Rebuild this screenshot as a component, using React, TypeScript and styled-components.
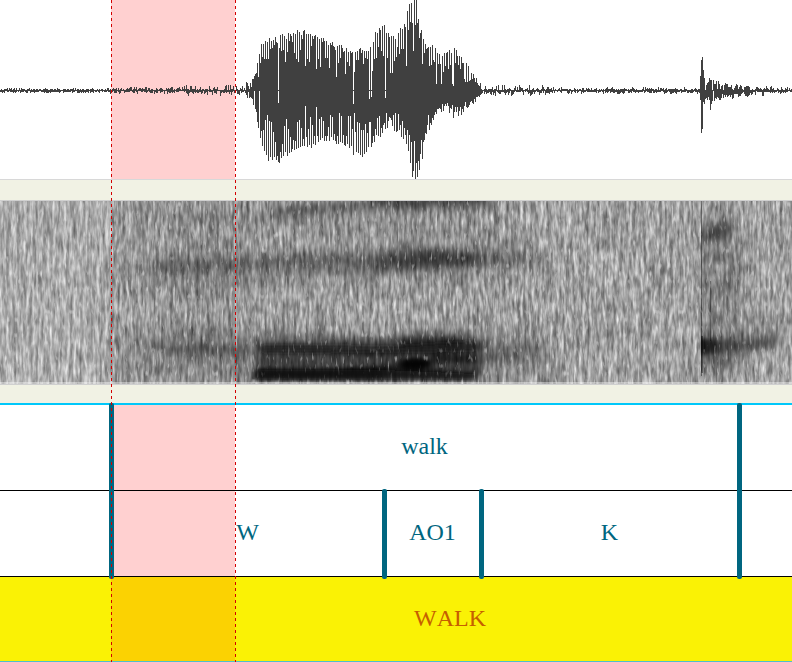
import React from "react";
import styled, { createGlobalStyle } from "styled-components";

const GlobalStyle = createGlobalStyle`
  * { box-sizing: border-box; }
  body { margin: 0; background: #ffffff; }
`;

/* The visible window is 792 steps long; every position is a step in it. */
const SPAN = 792;
const pct = (n: number) => `${(n / SPAN) * 100}%`;

const Editor = styled.main`
  position: relative;
  display: flex;
  flex-direction: column;
  width: 100%;
  overflow: hidden;
  background: #f1f2e4;
  font-family: "Liberation Serif", "Times New Roman", serif;
  font-kerning: none;
`;

const WavePanel = styled.section`
  position: relative;
  height: 180px;
  background: #ffffff;
  border-bottom: 1px solid #d8d8d8;
`;

const SpectrumPanel = styled.section`
  height: 185px;
  margin: 20px 0 18px;
  border-top: 1px solid #d0d0d0;
  border-bottom: 1px solid #d0d0d0;
`;

const Plot = styled.svg`
  position: relative;
  display: block;
  width: 100%;
  height: 100%;
`;

const Tiers = styled.section`
  border-top: 2px solid #00c8fa;
`;

const Tier = styled.div<{ $active?: boolean; $lead: number; $tail: number }>`
  position: relative;
  display: flex;
  height: ${(p) => (p.$active ? 85 : 86)}px;
  padding: 0 ${(p) => pct(p.$tail)} 0 ${(p) => pct(p.$lead)};
  background: ${(p) => (p.$active ? "#faf205" : "#ffffff")};
  color: ${(p) => (p.$active ? "#c65f00" : "#006680")};
  border-bottom: 1px solid ${(p) => (p.$active ? "#50c0c8" : "#000000")};
`;

const Interval = styled.span<{ $length: number }>`
  position: relative;
  flex: ${(p) => p.$length} 1 0;
  text-align: center;
  font-size: 24px;
  line-height: 82px;
`;

const Selection = styled.div<{ $active?: boolean }>`
  position: absolute;
  top: 0;
  bottom: 0;
  left: ${pct(111)};
  width: ${pct(124)};
  background: ${(p) => (p.$active ? "#fbd202" : "#ffd0d0")};
`;

const Boundary = styled.i<{ $at: number; $tiers?: number }>`
  position: absolute;
  z-index: 1;
  top: -2px;
  left: ${(p) => pct(p.$at)};
  width: 5px;
  height: ${(p) => (p.$tiers ?? 1) * 86 + 4}px;
  margin-left: -2px;
  border-radius: 2px;
  background: #006680;
`;

const Cursor = styled.i<{ $at: number }>`
  position: absolute;
  z-index: 2;
  top: 0;
  bottom: 0;
  left: ${(p) => pct(p.$at)};
  width: 1px;
  background: repeating-linear-gradient(#d40000 0 3px, transparent 3px 6px);
`;

/* Deterministic noise, so the trace looks the same on every render. */
function makeRandom(seed: number) {
  let s = seed;
  return () => {
    s = (s * 1664525 + 1013904223) >>> 0;
    return s / 4294967296;
  };
}

/* Peaks of the voiced part, one per column from step 246, in thirds of a unit. */
const VOICED_TOP = [
  245, 250, 258, 268, 248, 262, 236, 236, 228, 222, 219, 189, 232, 162, 190, 132, 172, 132, 178, 123,
  178, 126, 178, 114, 147, 123, 144, 120, 136, 111, 126, 129, 308, 144, 105, 152, 101, 150, 108, 186,
  117, 155, 99, 122, 102, 107, 125, 99, 158, 102, 178, 90, 186, 96, 150, 105, 117, 93, 90, 198,
  102, 177, 102, 186, 102, 137, 108, 117, 108, 105, 207, 111, 177, 117, 201, 114, 126, 114, 123, 174,
  123, 174, 135, 204, 129, 134, 126, 138, 141, 150, 231, 138, 189, 135, 174, 135, 144, 155, 153, 222,
  144, 186, 155, 198, 153, 159, 156, 312, 216, 156, 180, 153, 180, 147, 144, 158, 150, 192, 153, 174,
  153, 177, 153, 297, 141, 291, 213, 126, 177, 96, 174, 99, 141, 84, 90, 153, 78, 168, 75, 293,
  99, 174, 99, 111, 219, 108, 219, 108, 183, 117, 171, 141, 99, 162, 84, 147, 87, 147, 72, 81,
  198, 33, 90, 12, 66, 9, 69, 153, 0, 75, 0, 69, 57, 114, 99, 90, 192, 117, 159, 132,
  147, 144, 141, 198, 141, 195, 135, 180, 186, 144, 252, 159, 192, 162, 192, 252, 168, 216, 159, 198,
  159, 156, 207, 150, 195, 159, 252, 258, 144, 189, 150, 168, 195, 167, 207, 171, 189, 189, 237, 246,
  189, 246, 198, 243, 240, 219, 237, 222, 234, 246, 234, 249, 255, 258, 249, 267,
];

const VOICED_BOTTOM = [
  285, 294, 276, 294, 290, 294, 297, 315, 273, 327, 336, 366, 384, 272, 414, 393, 438, 390, 453, 360,
  465, 345, 483, 363, 471, 366, 480, 396, 471, 426, 480, 468, 486, 489, 456, 474, 432, 468, 378, 456,
  357, 468, 387, 459, 411, 456, 447, 420, 450, 423, 447, 366, 444, 360, 441, 384, 438, 417, 438, 318,
  411, 441, 387, 435, 351, 444, 375, 432, 408, 435, 321, 408, 426, 357, 420, 351, 414, 363, 423, 408,
  423, 408, 381, 423, 345, 411, 351, 420, 402, 423, 432, 408, 432, 339, 426, 348, 429, 405, 435, 438,
  408, 432, 348, 444, 348, 438, 387, 465, 339, 396, 456, 366, 459, 369, 465, 390, 471, 390, 462, 372,
  456, 399, 441, 366, 366, 441, 429, 408, 426, 387, 405, 354, 408, 348, 411, 384, 399, 375, 369, 387,
  339, 384, 363, 351, 354, 360, 378, 345, 393, 339, 396, 393, 342, 390, 375, 411, 363, 417, 384, 405,
  432, 390, 453, 405, 489, 426, 531, 513, 423, 540, 489, 531, 483, 510, 462, 420, 477, 426, 420, 399,
  402, 375, 345, 390, 369, 375, 354, 360, 345, 336, 342, 327, 327, 324, 327, 336, 312, 333, 318, 312,
  318, 309, 318, 339, 324, 327, 315, 354, 336, 321, 336, 321, 348, 333, 321, 345, 327, 336, 318, 306,
  321, 324, 321, 315, 306, 303, 309, 312, 297, 306, 291, 290, 288, 291, 284, 282,
];

/* Release of the final consonant, one [top, bottom] pair per column from step 700. */
const BURST: [number, number][] = [
  [76, 100], [60, 133], [57, 129], [70, 102], [78, 104], [90, 99], [85, 98], [83, 100], [82, 97], [78, 100],
  [80, 110], [80, 104], [90, 101], [80, 90], [84, 101], [84, 98], [81, 99], [89, 97], [81, 98], [84, 100],
  [89, 100], [86, 98], [85, 94], [90, 98], [85, 95], [83, 97], [84, 95], [84, 97], [87, 96], [87, 95],
  [87, 97], [85, 95], [89, 99], [90, 98], [88, 94], [86, 94], [84, 94], [85, 94], [89, 97], [87, 96],
  [85, 96], [86, 94], [89, 93], [90, 92], [87, 94], [87, 96], [86, 96], [86, 97], [86, 96], [87, 95],
];

const VOICED_START = 246;
const BURST_START = 700;

function restLevel(x: number) {
  if (x < 110) return 2;
  if (x < 180) return 3;
  if (x < 236) return 5;
  if (x < 246) return 5;
  if (x < 550) return 5;
  if (x < 700) return 3;
  if (x < 772) return 5;
  return 3;
}

function buildWave() {
  const random = makeRandom(29);
  let d = "";
  for (let x = 0; x < SPAN; x++) {
    const v = x - VOICED_START;
    const b = x - BURST_START;
    let top: number;
    let bottom: number;
    if (v >= 0 && v < VOICED_TOP.length) {
      top = Math.round(VOICED_TOP[v] / 3);
      bottom = Math.round(VOICED_BOTTOM[v] / 3);
    } else if (b >= 0 && b < BURST.length) {
      [top, bottom] = BURST[b];
    } else {
      const level = restLevel(x);
      const swing = random() * level;
      const up = random() > 0.5;
      top = 90 - Math.round(up ? swing : random());
      bottom = 91 + Math.round(up ? random() * 2 : swing);
    }
    d += `M${x} ${top}h1V${bottom}h-1z`;
  }
  return d;
}

const WAVE_PATH = buildWave();

function Waveform() {
  return (
    <Plot viewBox="0 0 792 179" preserveAspectRatio="none" role="img" aria-label="Waveform" shapeRendering="crispEdges">
      <path d="M0 90h792v1H0z" fill="#404040" />
      <path d={WAVE_PATH} fill="#404040" />
    </Plot>
  );
}

function Spectrogram() {
  return (
    <Plot viewBox="0 0 792 183" preserveAspectRatio="none" role="img" aria-label="Spectrogram">
      <defs>
        <filter id="grain" x="0" y="0" width="100%" height="100%" colorInterpolationFilters="sRGB">
          <feTurbulence type="fractalNoise" baseFrequency="0.34 0.08" numOctaves="2" seed="7" />
          <feColorMatrix values="0.65 0 0 0 0.37  0.65 0 0 0 0.37  0.65 0 0 0 0.37  0 0 0 0 1" />
        </filter>
        <filter id="sparks" x="0" y="0" width="100%" height="100%" colorInterpolationFilters="sRGB">
          <feTurbulence type="fractalNoise" baseFrequency="0.42 0.13" numOctaves="1" seed="31" />
          <feColorMatrix values="0 0 0 0 1  0 0 0 0 1  0 0 0 0 1  4 0 0 0 -2.45" />
        </filter>
        <filter id="streaks" x="0" y="0" width="100%" height="100%" colorInterpolationFilters="sRGB">
          <feTurbulence type="fractalNoise" baseFrequency="0.3 0.02" numOctaves="2" seed="12" />
          <feColorMatrix values="0 0 0 0 0  0 0 0 0 0  0 0 0 0 0  1.8 0 0 0 -0.6" />
        </filter>
        <filter id="soft" x="-20%" y="-60%" width="140%" height="220%">
          <feGaussianBlur stdDeviation="5 4" />
        </filter>
        <filter id="edge" x="-20%" y="-60%" width="140%" height="220%">
          <feGaussianBlur stdDeviation="3 2" />
        </filter>
        <filter id="haze" x="-30%" y="-60%" width="160%" height="220%">
          <feGaussianBlur stdDeviation="14 10" />
        </filter>
        <clipPath id="release">
          <path d="M701 0h91v183h-91z" />
        </clipPath>
      </defs>
      <rect width="792" height="183" filter="url(#grain)" />
      <rect width="111" height="183" fill="#fff" opacity="0.16" />
      <g filter="url(#haze)">
        <path d="M130 0H500V24L300 30L130 24z" opacity="0.12" />
        <path d="M120 55L520 35V78L120 90z" opacity="0.13" />
        <path d="M120 125H550V183H120z" opacity="0.14" />
        <path d="M170 10H235V170H170z" opacity="0.08" />
      </g>
      <g filter="url(#soft)">
        <path d="M270 7L370 0H490V5L370 7L270 17z" opacity="0.4" />
        <path d="M370 -6H490V4H370z" opacity="0.5" />
        <path d="M150 60L245 56L370 52L470 50L545 53V62L470 67L370 70L150 70z" opacity="0.28" />
        <path d="M380 52L425 45L480 53L480 64L425 69L380 66z" opacity="0.38" />
        <path d="M160 144L250 142V154L160 152z" opacity="0.36" />
        <path d="M256 138L390 137L420 132L470 134L482 145V176H256z" opacity="0.52" />
        <path d="M482 140L540 145V160L482 162z" opacity="0.22" />
      </g>
      <g filter="url(#edge)">
        <path d="M260 144H300L370 147L410 144L455 140L480 142V149L450 153L370 155L260 151z" opacity="0.42" />
        <path d="M257 167L320 168L390 164L425 168L475 171V179H254z" opacity="0.6" />
        <path d="M252 169L320 168L382 166V179H252z" opacity="0.5" />
        <ellipse cx="415" cy="163" rx="17" ry="6" opacity="0.7" />
        <path d="M400 137H462V148H400z" opacity="0.4" />
        <path d="M430 153H478V162H430z" opacity="0.5" />
      </g>
      <g clipPath="url(#release)">
        <path d="M695 15H740V175H695z" opacity="0.18" filter="url(#haze)" />
        <g filter="url(#soft)">
          <path d="M698 29L732 20V36L698 42z" opacity="0.5" />
          <path d="M695 137L735 137L778 136V145L735 152L695 157z" opacity="0.52" />
          <path d="M710 80H740V90H710z" opacity="0.2" />
          <path d="M705 158H738V167H705z" opacity="0.3" />
        </g>
        <path d="M698 138H717V153H698z" opacity="0.5" filter="url(#edge)" />
      </g>
      <path d="M701 0h1v175h-1z" opacity="0.4" />
      <path d="M701 135h2v37h-2z" opacity="0.4" />
      <path d="M710 80h1v60h-1z" opacity="0.35" />
      <rect width="792" height="183" filter="url(#streaks)" opacity="0.35" />
      <rect width="792" height="183" filter="url(#sparks)" opacity="0.6" />
      <g filter="url(#edge)">
        <path d="M256 169H382L475 173V178H256z" fill="#161616" opacity="0.6" />
        <path d="M262 144L400 145L475 140V150L262 152z" fill="#202020" opacity="0.45" />
        <ellipse cx="415" cy="163" rx="14" ry="5" opacity="0.8" />
      </g>
      <path d="M0 181h792v2H0z" fill="#fff" opacity="0.4" />
    </Plot>
  );
}

export default function App() {
  return (
    <>
      <GlobalStyle />
      <Editor>
        <WavePanel>
          <Selection />
          <Waveform />
        </WavePanel>
        <SpectrumPanel>
          <Spectrogram />
        </SpectrumPanel>
        <Tiers>
          <Tier $lead={111} $tail={54}>
            <Selection />
            <Boundary $at={111} $tiers={2} />
            <Boundary $at={739} $tiers={2} />
            <Interval $length={1}>walk</Interval>
          </Tier>
          <Tier $lead={111} $tail={54}>
            <Selection />
            <Boundary $at={384} />
            <Boundary $at={481} />
            <Interval $length={273}>W</Interval>
            <Interval $length={97}>AO1</Interval>
            <Interval $length={257}>K</Interval>
          </Tier>
          <Tier $active $lead={108} $tail={0}>
            <Selection $active />
            <Interval $length={1}>WALK</Interval>
          </Tier>
        </Tiers>
        <Cursor $at={111} />
        <Cursor $at={235} />
      </Editor>
    </>
  );
}
